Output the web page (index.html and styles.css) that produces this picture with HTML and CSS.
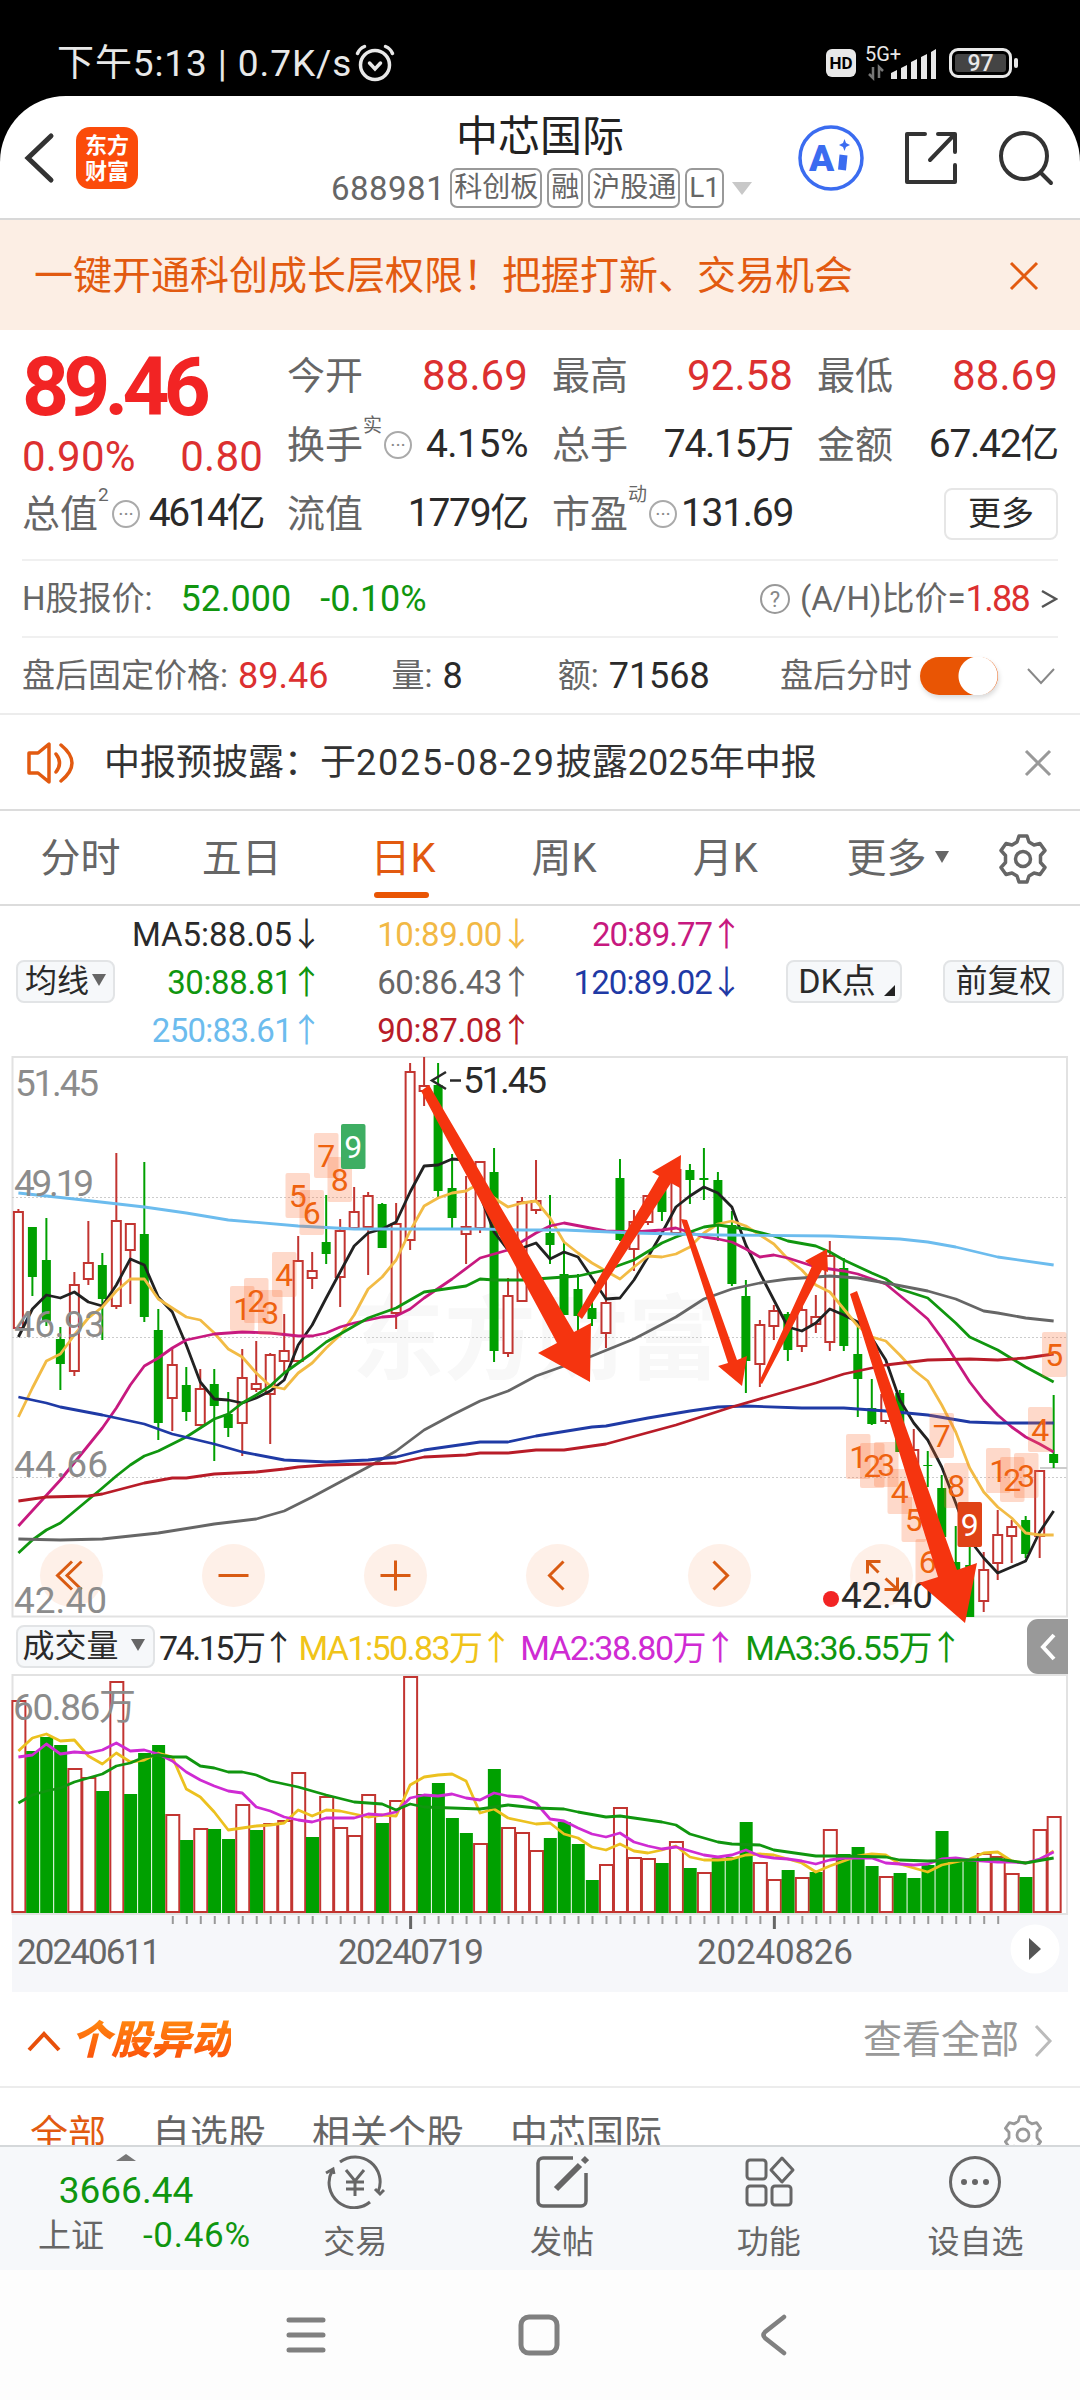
FILE: index.html
```
<!DOCTYPE html>
<html lang="zh-CN">

<head>
    <meta charset="UTF-8">
    <meta name="viewport" content="width=device-width, initial-scale=1.0">
    <title>中芯国际 688981</title>
    <link rel="stylesheet" href="styles.css">
</head>

<body>

    <!-- 状态栏 -->
    <div class="status-bar">
        <span class="status-time">下午5:13 | 0.7K/s</span>
        <svg class="alarm" width="40" height="40" viewBox="0 0 40 40" fill="none" stroke="#e8e8e8" stroke-width="3.5" stroke-linecap="round">
            <circle cx="20" cy="22" r="14.5" />
            <path d="M14.5 20l5.500 6l5.500-6M2.500 10.500q2-5 7-7M37.500 10.500q-2-5-7-7" />
        </svg>
        <div class="status-right">
            <span class="hd">HD</span>
            <svg class="signal" width="72" height="38" viewBox="0 0 72 38">
                <text class="net-text" x="1" y="17">5G+</text>
                <path d="M9 23v11l-4-4M15 34V23l4 4" fill="none" stroke="#777" stroke-width="2.500" />
                <path d="M27 35v-6l6-3v9zM37 35V24l6-3v14zM47 35V18l6-3v20zM57 35V13l6-3v25zM67 35V8l5-3v30z" fill="#e8e8e8" />
            </svg>
            <span class="battery"><span>97</span></span>
        </div>
    </div>

    <div class="app">
        <!-- 标题栏 -->
        <div class="header">
            <svg class="back" width="32" height="52" viewBox="0 0 32 52" fill="none" stroke="#333" stroke-width="5" stroke-linecap="round">
                <path d="M27 4L4 26l23 22" />
            </svg>
            <div class="logo">东方<br>财富</div>
            <div class="title">
                <div class="name">中芯国际</div>
                <div class="code">688981<span class="tag">科创板</span><span class="tag">融</span><span class="tag">沪股通</span><span class="tag">L1</span><i class="drop"></i></div>
            </div>
            <div class="actions">
                <svg width="66" height="66" viewBox="0 0 66 66">
                    <circle cx="33" cy="33" r="31" fill="none" stroke="#3b6cf0" stroke-width="3.500" />
                    <text class="ai-text" x="11" y="46">A</text>
                    <path d="M45.500 30l-1.500 15" stroke="#3b6cf0" stroke-width="8" />
                    <path d="M46.500 14l1.500 4 4 2-4 2-1.500 4-1.500-4-4-2 4-2z" fill="#3b6cf0" />
                </svg>
                <svg width="56" height="56" viewBox="0 0 56 56" fill="none" stroke="#333" stroke-width="4" stroke-linecap="round" stroke-linejoin="round">
                    <path d="M22 4H4v48h48V35M35 4h17v18M51 5L27 30" />
                </svg>
                <svg width="56" height="56" viewBox="0 0 56 56" fill="none" stroke="#333" stroke-width="4" stroke-linecap="round">
                    <circle cx="26" cy="26" r="23" />
                    <path d="M43 43l10 10" />
                </svg>
            </div>
        </div>

        <div class="banner">
            <span>一键开通科创成长层权限！把握打新、交易机会</span>
            <svg width="30" height="30" viewBox="0 0 30 30" stroke="#e25a10" stroke-width="3">
                <path d="M2 2l26 26M28 2L2 28" />
            </svg>
        </div>

        <!-- 行情 -->
        <div class="quote">
            <div class="quote-price">
                <div class="price">89.46</div>
                <div class="change"><span>0.90%</span><span>0.80</span></div>
                <div class="cell total"><label>总值<sup>2</sup></label><i class="dots">···</i><b class="tight">4614亿</b></div>
            </div>
            <div class="quote-col">
                <div class="cell"><label>今开</label><b class="red">88.69</b></div>
                <div class="cell"><label>换手<sup>实</sup></label><i class="dots">···</i><b>4.15%</b></div>
                <div class="cell"><label>流值</label><b class="mid">1779亿</b></div>
            </div>
            <div class="quote-col">
                <div class="cell"><label>最高</label><b class="red">92.58</b></div>
                <div class="cell"><label>总手</label><b class="mid">74.15万</b></div>
                <div class="cell"><label>市盈<sup>动</sup></label><i class="dots">···</i><b class="mid">131.69</b></div>
            </div>
            <div class="quote-col">
                <div class="cell"><label>最低</label><b class="red">88.69</b></div>
                <div class="cell"><label>金额</label><b class="mid">67.42亿</b></div>
                <div class="cell end"><span class="more-btn">更多</span></div>
            </div>
        </div>

        <div class="line-row">
            <span class="gray">H股报价:</span>
            <span class="green h-price">52.000</span>
            <span class="green h-rate">-0.10%</span>
            <div class="push">
                <i class="help">?</i><span class="gray">(A/H)比价=</span><span class="red ratio">1.88</span>
                <svg class="arrow-r" width="18" height="22" viewBox="0 0 18 22" fill="none" stroke="#555" stroke-width="2.500">
                    <path d="M2 3l14 8-14 8" />
                </svg>
            </div>
        </div>

        <div class="line-row after">
            <span class="gray">盘后固定价格:</span>
            <span class="red">89.46</span>
            <span class="gray vol-label">量:</span>
            <span>8</span>
            <span class="gray amt-label">额:</span>
            <span>71568</span>
            <div class="push">
                <span class="gray">盘后分时</span>
                <span class="switch"></span>
                <svg class="expand" width="28" height="18" viewBox="0 0 28 18" fill="none" stroke="#888" stroke-width="2">
                    <path d="M1 2l13 14L27 2" />
                </svg>
            </div>
        </div>

        <div class="notice">
            <svg width="48" height="42" viewBox="0 0 48 42" fill="none" stroke="#e25a10" stroke-width="3.500" stroke-linejoin="round">
                <path d="M2 11h9L22 2v38l-11-9H2z" />
                <path d="M29 12q7 9 0 18M34 3q22 18 0 36" stroke-linecap="round" />
            </svg>
            <p>中报预披露：于<span class="date">2025-08-29</span>披露2025年中报</p>
            <svg class="close" width="28" height="28" viewBox="0 0 28 28" stroke="#999" stroke-width="3">
                <path d="M2 2l24 24M26 2L2 26" />
            </svg>
        </div>

        <!-- K线周期 -->
        <div class="tabs">
            <span>分时</span>
            <span>五日</span>
            <span class="active">日K</span>
            <span>周K</span>
            <span>月K</span>
            <span>更多<i class="tri"></i></span>
            <svg width="50" height="50" viewBox="0 0 50 50" fill="none" stroke="#666" stroke-width="3.500" stroke-linejoin="round">
                <path d="M21 2h8l2 6 5 3 6-1.500 5 7-4.500 5v7l4.500 5-5 7-6-1.500-5 3-2 6h-8l-2-6-5-3-6 1.500-5-7 4.500-5v-7L3 16.500l5-7L14 11l5-3z" />
                <circle cx="25" cy="25" r="7.500" />
            </svg>
        </div>

        <!-- 均线数值 -->
        <div class="ma">
            <span class="chip ma-btn">均线<i class="tri"></i></span>
            <div class="ma-grid">
                <span class="c5">MA5:88.05<em>↓</em></span>
                <span class="c10">10:89.00<em>↓</em></span>
                <span class="c20">20:89.77<em>↑</em></span>
                <span class="c30">30:88.81<em>↑</em></span>
                <span class="c60">60:86.43<em>↑</em></span>
                <span class="c120">120:89.02<em>↓</em></span>
                <span class="c250">250:83.61<em>↑</em></span>
                <span class="c90">90:87.08<em>↑</em></span>
            </div>
            <span class="chip dk">DK点<i class="corner"></i></span>
            <span class="chip fq">前复权</span>
        </div>

        <svg id="price-chart" class="price-chart" viewBox="0 1052 1080 567"></svg>

        <div class="vol-head">
            <span class="chip vol-btn">成交量<i class="tri"></i></span>
            <span class="v0">74.15万<em>↑</em></span>
            <span class="v1">MA1:50.83万<em>↑</em></span>
            <span class="v2">MA2:38.80万<em>↑</em></span>
            <span class="v3">MA3:36.55万<em>↑</em></span>
            <span class="fold">
                <svg width="16" height="28" viewBox="0 0 16 28" fill="none" stroke="#fff" stroke-width="4">
                    <path d="M14 2L3 14l11 12" />
                </svg>
            </span>
        </div>

        <svg id="volume-chart" class="volume-chart" viewBox="0 1674 1080 318"></svg>

        <!-- 个股异动 -->
        <div class="section-head">
            <svg width="34" height="22" viewBox="0 0 34 22" fill="none" stroke="#e8500a" stroke-width="4">
                <path d="M2 20L17 4l15 16" />
            </svg>
            <h2>个股异动</h2>
            <span class="see-all">查看全部</span>
            <svg width="20" height="34" viewBox="0 0 20 34" fill="none" stroke="#bbb" stroke-width="3">
                <path d="M3 2l14 15L3 32" />
            </svg>
        </div>
        <div class="sub-tabs">
            <span class="active">全部</span>
            <span>自选股</span>
            <span>相关个股</span>
            <span>中芯国际</span>
            <svg width="40" height="40" viewBox="0 0 50 50" fill="none" stroke="#999" stroke-width="3.500" stroke-linejoin="round">
                <path d="M21 2h8l2 6 5 3 6-1.500 5 7-4.500 5v7l4.500 5-5 7-6-1.500-5 3-2 6h-8l-2-6-5-3-6 1.500-5-7 4.500-5v-7L3 16.500l5-7L14 11l5-3z" />
                <circle cx="25" cy="25" r="7.500" />
            </svg>
        </div>

        <!-- 底部导航 -->
        <div class="bottom-nav">
            <div class="index">
                <i class="up"></i>
                <div class="green point">3666.44</div>
                <div class="index-row"><span>上证</span><span class="green rate">-0.46%</span></div>
            </div>
            <div class="nav-item">
                <svg width="60" height="54" viewBox="0 0 60 54" fill="none" stroke="#666" stroke-width="3">
                    <path d="M15 7A25 25 0 0 1 53 37M45 47A25 25 0 0 1 7 16" />
                    <path d="M59 35l-4 4-5-5M1 18l7-4 1 5" />
                    <path d="M21 15l9 11 9-11M30 26v15M21 27h18M21 34h18" />
                </svg>
                <span>交易</span>
            </div>
            <div class="nav-item">
                <svg width="54" height="54" viewBox="0 0 54 54" fill="none" stroke="#666" stroke-width="3.500">
                    <path d="M38 3H8a5 5 0 0 0-5 5v38a5 5 0 0 0 5 5h38a5 5 0 0 0 5-5V18" />
                    <path d="M21 34L45 10M48 7l4-4" stroke-width="6" />
                </svg>
                <span>发帖</span>
            </div>
            <div class="nav-item">
                <svg width="54" height="54" viewBox="0 0 54 54" fill="none" stroke="#666" stroke-width="3">
                    <rect x="5" y="5" width="19" height="19" rx="3" />
                    <rect x="5" y="31" width="19" height="19" rx="3" />
                    <rect x="30" y="31" width="19" height="19" rx="3" />
                    <path d="M40 3l11 12-11 12-11-12z" stroke-linejoin="round" />
                </svg>
                <span>功能</span>
            </div>
            <div class="nav-item">
                <svg width="54" height="54" viewBox="0 0 54 54" fill="none" stroke="#666" stroke-width="3">
                    <circle cx="27" cy="27" r="24.500" />
                    <path d="M16 27h.01M27 27h.01M38 27h.01" stroke-width="6" stroke-linecap="round" />
                </svg>
                <span>设自选</span>
            </div>
        </div>
    </div>

    <!-- 系统导航键 -->
    <div class="system-nav">
        <svg class="menu" width="40" height="40" viewBox="0 0 40 40" stroke="#808080" stroke-width="5" stroke-linecap="round">
            <path d="M3 5h34M3 20h34M3 35h34" />
        </svg>
        <svg class="home" width="42" height="42" viewBox="0 0 42 42" fill="none" stroke="#808080" stroke-width="5">
            <rect x="3" y="3" width="36" height="36" rx="8" />
        </svg>
        <svg width="28" height="42" viewBox="0 0 28 42" fill="none" stroke="#808080" stroke-width="4.500" stroke-linecap="round">
            <path d="M25 3L6 18q-3 3 0 6l19 15" />
        </svg>
    </div>

    <script src="chart.js"></script>
</body>

</html>
```
FILE: styles.css
```
* {
    box-sizing: border-box;
}

body {
    margin: 0;
    width: 1080px;
    height: 2400px;
    overflow: hidden;
    background-color: #000;
    font-family: Roboto, "Noto Sans CJK SC", sans-serif;
    color: #2a2a2a;
    line-height: 1;
}

i,
em {
    font-style: normal;
}

svg {
    flex: none;
    display: block;
}

.red {
    color: #dc3030;
}

.green {
    color: #10960f;
}

.gray {
    color: #666;
}

/* 状态栏 */
.status-bar {
    height: 96px;
    padding: 30px 68px 0 57px;
    display: flex;
    align-items: center;
    color: #e8e8e8;
}

.status-time {
    font-size: 37px;
    letter-spacing: 0.9px;
    white-space: pre;
}

.alarm {
    margin-left: 3px;
}

.status-right {
    margin-left: auto;
    display: flex;
    align-items: center;
    gap: 8px;
}

.signal {
    overflow: visible;
}

.hd {
    width: 30px;
    height: 28px;
    border-radius: 6px;
    background-color: #e8e8e8;
    color: #000;
    font-size: 17px;
    font-weight: 700;
    line-height: 29px;
    text-align: center;
}

.net-text {
    font-size: 20px;
    fill: #e8e8e8;
}

.battery {
    position: relative;
    width: 63px;
    height: 30px;
    margin-left: 5px;
    padding: 3px;
    border: 3px solid #e8e8e8;
    border-radius: 9px;
}

.battery span {
    display: block;
    height: 18px;
    border-radius: 3px;
    background-color: #444;
    font-size: 23px;
    line-height: 19px;
    font-weight: 500;
    text-align: center;
}

.battery::after {
    content: "";
    position: absolute;
    right: -9px;
    top: 7px;
    width: 4px;
    height: 10px;
    border-radius: 2px;
    background-color: #e8e8e8;
}

.app {
    height: 2174px;
    overflow: hidden;
    border-radius: 66px 66px 0 0;
    background-color: #fff;
}

/* 标题栏 */
.header {
    height: 124px;
    display: flex;
    align-items: center;
    padding: 2px 26px 0 24px;
    border-bottom: 2px solid #d8d8d8;
}

.logo {
    width: 62px;
    height: 62px;
    margin-left: 20px;
    padding-top: 6px;
    border-radius: 14px;
    background-color: #fb4b0a;
    color: #fff;
    font-size: 22px;
    font-weight: 700;
    line-height: 26px;
    text-align: center;
}

.title {
    width: 440px;
    margin-left: 182px;
    display: flex;
    flex-direction: column;
    align-items: center;
    white-space: nowrap;
}

.name {
    margin-top: 4px;
    font-size: 42px;
    line-height: 50px;
    color: #222;
}

.code {
    display: flex;
    align-items: center;
    height: 40px;
    margin: 6px 0 0 3px;
    font-size: 33px;
    letter-spacing: 0.5px;
    color: #666;
}

.tag {
    height: 40px;
    margin-left: 5px;
    padding: 0 2px;
    border: 2px solid #999;
    border-radius: 7px;
    font-size: 28px;
    line-height: 36px;
    letter-spacing: 0;
}

.drop {
    margin-left: 8px;
    border: 10px solid transparent;
    border-top: 13px solid #c8c8c8;
    border-bottom: 0;
}

.actions {
    margin-left: auto;
    display: flex;
    align-items: center;
    gap: 39px;
}

.ai-text {
    font-size: 37px;
    font-weight: 900;
    fill: #3b6cf0;
}

.banner {
    height: 110px;
    padding: 2px 41px 0 34px;
    display: flex;
    align-items: center;
    justify-content: space-between;
    background-color: #fceee4;
    color: #e25a10;
    font-size: 39px;
}

/* 行情 */
.quote {
    height: 229px;
    padding: 0 22px;
    display: flex;
    gap: 24px;
}

.quote-price {
    width: 241px;
}

.price {
    height: 106px;
    padding-top: 13px;
    font-size: 82px;
    line-height: 88px;
    font-weight: 700;
    letter-spacing: -5.800px;
    color: #f22424;
}

.change {
    height: 42px;
    display: flex;
    justify-content: space-between;
    font-size: 42px;
    line-height: 42px;
    letter-spacing: 0.2px;
    color: #dc3030;
}

.quote-col {
    width: 241px;
    padding-top: 11px;
}

.cell {
    height: 69px;
    display: flex;
    align-items: center;
    justify-content: space-between;
    white-space: nowrap;
}

.total {
    margin-top: 1px;
}

.cell label {
    position: relative;
    font-size: 38px;
    color: #666;
}

.cell sup {
    position: absolute;
    left: 100%;
    top: -9px;
    font-size: 19px;
    line-height: 18px;
}

.cell b {
    font-size: 39px;
    font-weight: 400;
    letter-spacing: -0.5px;
}

.cell .mid {
    letter-spacing: -1.300px;
}

.cell .red {
    font-size: 42px;
    letter-spacing: 0.1px;
}

.cell .tight {
    letter-spacing: -2.500px;
}

.dots {
    width: 28px;
    height: 28px;
    margin: 0 auto 0 21px;
    border: 2px solid #aaa;
    border-radius: 50%;
    font-size: 20px;
    line-height: 24px;
    text-align: center;
    color: #888;
}

.total .dots {
    margin-left: 14px;
}

.end {
    justify-content: flex-end;
}

.more-btn {
    width: 114px;
    height: 52px;
    border: 2px solid #e6e6e6;
    border-radius: 8px;
    font-size: 33px;
    line-height: 48px;
    text-align: center;
}

.line-row {
    height: 77px;
    margin: 0 22px;
    display: flex;
    align-items: center;
    border-top: 2px solid #f0f0f0;
    font-size: 33px;
    white-space: nowrap;
}

.line-row .green,
.line-row .red {
    font-size: 36px;
}

.line-row .ratio {
    letter-spacing: -1.700px;
}

.h-price {
    margin-left: 28px;
}

.h-rate {
    margin-left: 29px;
}

.push {
    margin-left: auto;
    display: flex;
    align-items: center;
}

.help {
    width: 30px;
    height: 30px;
    margin-right: 10px;
    border: 2px solid #999;
    border-radius: 50%;
    font-size: 22px;
    line-height: 27px;
    text-align: center;
    color: #888;
}

.arrow-r {
    margin-left: 11px;
}

.after {
    font-size: 36px;
}

.after .gray {
    font-size: 33px;
    margin-right: 10px;
}

.after .vol-label {
    margin-left: 63px;
}

.after .amt-label {
    margin-left: 95px;
}

.after .push .gray {
    margin-right: 8px;
}

.switch {
    width: 78px;
    height: 38px;
    margin-right: 29px;
    border-radius: 19px;
    background: radial-gradient(circle at 58px 19px, #fff 19px, #e95504 20px);
    box-shadow: 1px 3px 5px rgba(0, 0, 0, 0.15);
}

.expand {
    margin-right: 3px;
}

.notice {
    height: 98px;
    padding: 2px 28px 0 27px;
    display: flex;
    align-items: center;
    border-top: 2px solid #ececec;
    border-bottom: 2px solid #dcdcdc;
    font-size: 36px;
    color: #333;
}

.notice p {
    margin: 0 0 0 29px;
}

.date {
    letter-spacing: 1.800px;
}

.close {
    margin-left: auto;
}

/* K线周期 */
.tabs {
    height: 95px;
    padding: 2px 32px 0 0;
    display: flex;
    align-items: center;
    border-bottom: 2px solid #dcdcdc;
    font-size: 40px;
    color: #666;
}

.tabs span {
    position: relative;
    width: 161.200px;
    text-align: center;
}

.tabs svg {
    margin-left: auto;
}

.tabs .active {
    color: #e25a10;
}

.tabs .active::after {
    content: "";
    position: absolute;
    left: 52px;
    bottom: -19px;
    width: 55px;
    height: 6px;
    border-radius: 3px;
    background-color: #e95504;
}

.tri {
    display: inline-block;
    margin-left: 8px;
    border: 7px solid transparent;
    border-top: 12px solid #666;
    border-bottom: 0;
    vertical-align: 9px;
}

.tabs .tri {
    margin-right: -22px;
}

/* 均线数值 */
.ma {
    height: 146px;
    padding: 4px 16px 0;
    display: flex;
    align-items: center;
}

.chip {
    height: 43px;
    border: 2px solid #e2e4e6;
    border-radius: 8px;
    background-color: #f6f8fa;
    font-size: 32px;
    line-height: 39px;
    text-align: center;
    white-space: nowrap;
}

.ma-btn {
    width: 99px;
}

.ma-btn .tri {
    margin-left: 3px;
    vertical-align: 6px;
}

.ma-grid {
    display: grid;
    grid-template-columns: 202px 210px 210px;
    grid-auto-rows: 48px;
    align-items: center;
    justify-items: end;
    font-size: 33px;
    letter-spacing: -0.4px;
}

em {
    display: inline-block;
    margin-left: 5px;
    font-family: "Noto Sans CJK SC", sans-serif;
    width: 20px;
    text-indent: -7px;
    letter-spacing: 0;
}

.c5 {
    letter-spacing: 0;
}

.c10 {
    color: #f2b945;
}

.c20 {
    color: #c7197f;
    letter-spacing: -1px;
}

.c30 {
    color: #10960f;
}

.c60 {
    color: #666;
}

.c120 {
    color: #1f3aa5;
    letter-spacing: -0.9px;
}

.c250 {
    color: #6cbcee;
    letter-spacing: -0.7px;
}

.c90 {
    color: #b81c28;
}

.dk {
    position: relative;
    width: 116px;
    margin-left: 49px;
    padding-right: 14px;
    font-size: 34px;
}

.corner {
    position: absolute;
    right: 5px;
    bottom: 5px;
    border-left: 11px solid transparent;
    border-bottom: 11px solid #222;
}

.fq {
    width: 121px;
    margin-left: auto;
}

/* 图表 */
.price-chart {
    width: 1080px;
    height: 567px;
    overflow: visible;
    position: relative;
    z-index: 1;
}

.volume-chart {
    width: 1080px;
    height: 318px;
}

.axis-text {
    font-size: 37px;
    fill: #8c8c8c;
}

.date-text {
    font-size: 35px;
    fill: #666;
}

.mark-text {
    font-size: 37px;
    fill: #2a2a2a;
}

.badge-text {
    font-size: 32px;
    text-anchor: middle;
}

.watermark {
    font-size: 92px;
    font-weight: 700;
    fill: #f8f8f8;
}

.vol-head {
    height: 55px;
    padding: 0 12px 0 16px;
    display: flex;
    align-items: center;
    font-size: 34px;
    letter-spacing: -1.600px;
    white-space: nowrap;
}

.vol-btn {
    width: 139px;
    padding-right: 4px;
    letter-spacing: 0;
}

.vol-btn .tri {
    margin-left: 12px;
    vertical-align: 6px;
}

.v0 {
    margin-left: 4px;
    letter-spacing: -2.500px;
}

.v1 {
    margin-left: 10px;
    color: #f0c419;
}

.v2 {
    margin-left: 14px;
    letter-spacing: -1.400px;
    color: #cf2bd3;
}

.v3 {
    margin-left: 15px;
    letter-spacing: -1.300px;
    color: #10960f;
}

.fold {
    width: 41px;
    height: 55px;
    margin-left: auto;
    padding: 14px 0 0 13px;
    border-radius: 11px 0 0 11px;
    background-color: #999;
}

/* 个股异动 */
.section-head {
    height: 96px;
    padding: 3px 27px 0;
    display: flex;
    align-items: center;
    border-bottom: 2px solid #ececec;
}

.section-head h2 {
    margin: 0 0 0 10px;
    font-size: 40px;
    line-height: 48px;
    font-weight: 900;
    font-style: italic;
    background: linear-gradient(#ff8a10, #fb4b0a);
    -webkit-background-clip: text;
    color: transparent;
}

.see-all {
    margin: 0 14px 0 auto;
    font-size: 39px;
    color: #999;
}

.sub-tabs {
    height: 57px;
    padding: 26px 37px 0 30px;
    display: flex;
    align-items: flex-start;
    gap: 46px;
    overflow: hidden;
    font-size: 38px;
    line-height: 40px;
    color: #666;
}

.sub-tabs .active {
    color: #e25a10;
}

.sub-tabs svg {
    margin: 1px 0 0 auto;
}

/* 底部导航 */
.bottom-nav {
    height: 125px;
    display: flex;
    border-top: 2px solid #d5d8da;
    background-color: #f6f8fa;
}

.index {
    width: 252px;
    text-align: center;
}

.up {
    display: block;
    width: 0;
    margin: 7px auto 12px;
    border: 10px solid transparent;
    border-top: 0;
    border-bottom: 7px solid #777;
}

.point {
    font-size: 37px;
    line-height: 36px;
}

.index-row {
    margin-top: 10px;
    padding: 0 0 0 38px;
    display: flex;
    gap: 39px;
    font-size: 33px;
    line-height: 34px;
    color: #666;
}

.rate {
    font-size: 35px;
    letter-spacing: 0.7px;
}

.nav-item {
    width: 206.700px;
    padding-top: 8px;
    display: flex;
    flex-direction: column;
    align-items: center;
    gap: 17px;
    font-size: 32px;
    color: #666;
}

.system-nav {
    height: 130px;
    padding-left: 286px;
    display: flex;
    align-items: center;
    background-color: #fdfdfd;
}

.menu {
    margin-right: 192px;
}

.home {
    margin-right: 199px;
}
```
FILE: chart.js
```
const RED = '#c23531', GREEN = '#00a000';
const px = i => 18.4 + i * 13.99;

// 颜色, 最高, 实体上沿, 实体下沿, 最低
const candles = [
    ['r', 1209, 1212, 1328, 1328], ['g', 1227, 1227, 1277, 1296], ['g', 1218, 1260, 1321, 1326], ['g', 1327, 1339, 1364, 1390],
    ['r', 1272, 1285, 1371, 1376], ['r', 1221, 1263, 1279, 1285], ['g', 1253, 1265, 1299, 1340], ['r', 1153, 1221, 1306, 1309],
    ['r', 1223, 1224, 1250, 1304], ['g', 1162, 1234, 1317, 1322], ['g', 1309, 1330, 1423, 1440], ['r', 1347, 1365, 1398, 1431],
    ['g', 1367, 1385, 1412, 1421], ['r', 1369, 1389, 1425, 1425], ['g', 1369, 1384, 1406, 1461], ['g', 1392, 1414, 1428, 1437],
    ['r', 1349, 1378, 1423, 1456], ['r', 1341, 1384, 1389, 1392], ['r', 1353, 1355, 1394, 1444], ['r', 1314, 1351, 1361, 1373],
    ['r', 1236, 1261, 1361, 1361], ['r', 1252, 1271, 1278, 1289], ['g', 1195, 1242, 1254, 1264], ['r', 1219, 1231, 1277, 1307],
    ['r', 1187, 1212, 1228, 1230], ['r', 1192, 1196, 1227, 1275], ['g', 1203, 1204, 1248, 1248], ['r', 1203, 1224, 1313, 1329],
    ['r', 1063, 1072, 1240, 1250], ['r', 1057, 1086, 1091, 1106], ['g', 1063, 1085, 1191, 1197], ['g', 1154, 1188, 1218, 1228],
    ['r', 1176, 1227, 1234, 1264], ['r', 1162, 1162, 1228, 1233], ['g', 1148, 1172, 1351, 1362], ['r', 1278, 1296, 1353, 1357],
    ['r', 1197, 1202, 1301, 1301], ['r', 1160, 1201, 1210, 1214], ['g', 1195, 1233, 1245, 1264], ['g', 1242, 1274, 1315, 1315],
    ['g', 1274, 1289, 1316, 1333], ['g', 1302, 1308, 1319, 1326], ['r', 1280, 1303, 1333, 1348], ['g', 1159, 1178, 1240, 1241],
    ['r', 1210, 1222, 1249, 1271], ['r', 1196, 1196, 1222, 1225], ['g', 1183, 1187, 1212, 1221], ['r', 1165, 1170, 1233, 1233],
    ['g', 1164, 1170, 1180, 1204], ['g', 1148, 1178, 1180, 1200], ['g', 1172, 1180, 1224, 1241], ['g', 1211, 1225, 1284, 1286],
    ['g', 1280, 1296, 1361, 1393], ['r', 1320, 1325, 1364, 1387], ['r', 1305, 1311, 1326, 1340], ['g', 1312, 1314, 1350, 1361],
    ['r', 1303, 1310, 1346, 1352], ['r', 1295, 1317, 1324, 1333], ['r', 1241, 1256, 1342, 1351], ['g', 1258, 1268, 1346, 1351],
    ['g', 1325, 1354, 1379, 1417], ['g', 1379, 1408, 1424, 1425], ['r', 1390, 1395, 1421, 1424], ['g', 1390, 1393, 1452, 1452],
    ['r', 1429, 1450, 1480, 1485], ['g', 1451, 1465, 1466, 1487], ['g', 1475, 1488, 1537, 1540], ['g', 1526, 1562, 1570, 1580],
    ['g', 1547, 1565, 1617, 1617], ['r', 1552, 1570, 1601, 1612], ['r', 1510, 1535, 1563, 1580], ['r', 1520, 1527, 1536, 1563],
    ['g', 1516, 1520, 1554, 1558], ['r', 1470, 1471, 1536, 1558], ['g', 1395, 1454, 1463, 1468]
];

// 每根K线一个值的均线
const ma5 = [1337, 1309, 1295, 1298, 1292, 1302, 1306, 1285, 1259, 1265, 1297, 1312, 1345, 1382, 1399, 1400, 1403, 1398, 1391, 1380, 1345, 1325, 1298, 1272, 1246, 1233, 1229, 1222, 1192, 1166, 1165, 1159, 1160, 1195, 1232, 1250, 1248, 1243, 1259, 1252, 1257, 1278, 1299, 1298, 1280, 1257, 1233, 1207, 1196, 1187, 1193, 1207, 1245, 1273, 1300, 1327, 1331, 1323, 1309, 1315, 1322, 1338, 1360, 1400, 1423, 1440, 1467, 1503, 1540, 1558, 1573, 1567, 1561, 1532, 1511];
const ma10 = [1417, 1388, 1361, 1354, 1335, 1318, 1307, 1291, 1279, 1279, 1299, 1308, 1317, 1320, 1333, 1349, 1357, 1373, 1386, 1389, 1373, 1363, 1348, 1335, 1315, 1289, 1277, 1260, 1231, 1206, 1198, 1193, 1191, 1183, 1198, 1207, 1203, 1201, 1218, 1242, 1253, 1263, 1271, 1279, 1267, 1256, 1257, 1254, 1247, 1233, 1224, 1221, 1226, 1235, 1244, 1259, 1270, 1285, 1292, 1309, 1326, 1337, 1341, 1355, 1370, 1381, 1405, 1432, 1468, 1492, 1507, 1518, 1533, 1535, 1535];

// 其余均线只记录转折点 [序号, y]
const ma20 = [[0, 1526], [3, 1480], [6, 1428], [7, 1408], [8, 1385], [9, 1366], [10, 1358], [11, 1348], [12, 1340], [14, 1334], [16, 1332], [18, 1333], [20, 1336], [21, 1336], [22, 1333], [23, 1327], [24, 1323], [26, 1317], [27, 1316], [28, 1309], [29, 1298], [31, 1279], [33, 1258], [35, 1250], [37, 1233], [38, 1226], [39, 1223], [42, 1231], [44, 1232], [46, 1230], [47, 1228], [49, 1237], [50, 1239], [51, 1242], [52, 1249], [53, 1257], [54, 1255], [55, 1258], [57, 1267], [59, 1271], [60, 1274], [61, 1279], [62, 1284], [64, 1307], [65, 1319], [66, 1338], [67, 1360], [68, 1382], [69, 1400], [70, 1415], [71, 1427], [72, 1437], [73, 1444], [74, 1452]];
const ma30 = [[0, 1553], [1, 1540], [2, 1530], [3, 1523], [6, 1488], [7, 1476], [8, 1465], [9, 1456], [10, 1451], [12, 1437], [14, 1419], [15, 1414], [16, 1403], [17, 1395], [18, 1386], [19, 1373], [20, 1363], [21, 1353], [22, 1342], [24, 1326], [25, 1318], [27, 1308], [29, 1292], [30, 1290], [32, 1286], [33, 1279], [34, 1280], [36, 1280], [38, 1278], [40, 1276], [42, 1270], [44, 1260], [46, 1243], [47, 1237], [49, 1227], [50, 1225], [52, 1229], [54, 1236], [55, 1241], [57, 1246], [58, 1252], [59, 1260], [61, 1273], [62, 1279], [63, 1289], [65, 1298], [67, 1323], [68, 1337], [70, 1350], [72, 1367], [74, 1382]];
const ma60 = [[0, 1539], [3, 1540], [6, 1539], [10, 1533], [14, 1524], [17, 1519], [19, 1511], [21, 1497], [23, 1482], [25, 1467], [27, 1451], [29, 1430], [31, 1415], [33, 1401], [35, 1391], [37, 1376], [41, 1356], [44, 1339], [47, 1317], [49, 1299], [51, 1289], [53, 1283], [55, 1279], [57, 1277], [58, 1276], [60, 1278], [62, 1283], [65, 1291], [67, 1299], [69, 1311], [70, 1313], [72, 1318], [74, 1321]];
const ma90 = [[0, 1501], [2, 1497], [5, 1496], [6, 1494], [9, 1483], [11, 1478], [12, 1478], [14, 1474], [17, 1472], [19, 1469], [20, 1467], [22, 1465], [25, 1464], [27, 1463], [29, 1457], [32, 1455], [33, 1453], [35, 1453], [37, 1450], [39, 1450], [42, 1444], [47, 1425], [51, 1407], [54, 1395], [57, 1383], [59, 1374], [60, 1371], [62, 1365], [65, 1360], [68, 1359], [70, 1360], [72, 1358], [74, 1354]];
const ma120 = [[0, 1397], [2, 1403], [3, 1407], [6, 1415], [9, 1424], [11, 1434], [14, 1444], [16, 1452], [19, 1460], [22, 1462], [25, 1460], [27, 1457], [29, 1450], [33, 1442], [35, 1442], [37, 1436], [41, 1427], [42, 1426], [45, 1418], [48, 1411], [50, 1407], [52, 1406], [56, 1408], [59, 1408], [62, 1411], [65, 1415], [68, 1422], [70, 1423], [74, 1423]];
const ma250 = [[0, 1193], [4, 1199], [9, 1207], [12, 1213], [15, 1220], [20, 1226], [24, 1229], [33, 1229], [36, 1230], [39, 1230], [44, 1233], [50, 1235], [58, 1236], [63, 1239], [65, 1242], [67, 1247], [70, 1257], [74, 1265]];

// 九转序列
const badges = [
    [1, 230, 1286], [2, 244, 1278], [3, 258, 1290], [4, 272, 1252], [5, 285.5, 1173], [6, 299.5, 1190], [7, 314, 1133], [8, 327.5, 1157],
    [1, 846, 1434], [2, 860, 1443], [3, 874, 1442], [4, 887.5, 1469], [5, 901.5, 1497], [6, 915.5, 1539], [7, 929.5, 1413], [8, 944, 1463],
    [1, 986, 1448], [2, 1000, 1457], [3, 1014, 1453], [4, 1028, 1407], [5, 1042, 1332],
    [9, 341, 1124, '#3eae63'], [9, 957.5, 1502, '#e04316']
];

// 手绘箭头
const arrows = [
    '421,1091 429,1085 574,1332 591,1323 590,1382 538,1353 557,1343',
    '577,1315 582,1319 671,1183 680,1188 681,1155 652,1172 659,1176',
    '681,1219 687,1220 737,1360 747,1356 742,1386 718,1366 728,1363',
    '759,1382 762,1384 822,1270 828,1272 827,1249 805,1261 812,1266',
    '850,1294 857,1291 957,1570 977,1563 965,1623 919,1583 938,1577'
];

const volumes = 'r1700 g1751 g1737 g1745 r1768 r1777 g1791 r1681 g1794 g1753 g1745 r1814 g1840 r1828 g1829 g1839 r1804 g1830 r1823 r1820 r1772 g1837 r1796 r1827 r1835 r1794 g1823 r1800 r1676 g1794 g1783 g1818 g1833 r1843 g1769 r1827 r1832 r1850 g1838 g1822 g1844 g1880 r1864 r1807 r1857 r1858 g1863 r1841 g1868 r1872 g1858 g1857 g1822 r1862 r1879 g1870 r1877 g1872 r1829 g1854 g1847 g1866 r1876 g1873 g1878 g1865 g1831 g1862 g1861 r1853 r1856 r1873 g1877 r1829 r1816'.split(' ');
const volMa1 = [1751, 1738, 1734, 1741, 1740, 1756, 1764, 1753, 1762, 1760, 1753, 1757, 1789, 1797, 1812, 1830, 1828, 1826, 1825, 1823, 1810, 1816, 1810, 1811, 1814, 1817, 1815, 1816, 1785, 1777, 1775, 1774, 1781, 1813, 1809, 1818, 1821, 1824, 1823, 1834, 1838, 1847, 1850, 1844, 1851, 1853, 1850, 1846, 1857, 1860, 1860, 1859, 1855, 1854, 1855, 1859, 1863, 1872, 1866, 1861, 1856, 1854, 1855, 1864, 1868, 1872, 1865, 1862, 1859, 1853, 1852, 1861, 1863, 1860, 1851];
const volMa2 = [1757, 1755, 1744, 1754, 1752, 1753, 1750, 1743, 1751, 1750, 1754, 1761, 1772, 1780, 1786, 1791, 1793, 1807, 1811, 1817, 1820, 1822, 1818, 1818, 1818, 1814, 1815, 1812, 1798, 1795, 1796, 1794, 1798, 1800, 1793, 1796, 1797, 1803, 1819, 1821, 1828, 1834, 1837, 1833, 1842, 1846, 1849, 1847, 1851, 1855, 1857, 1855, 1850, 1856, 1858, 1859, 1861, 1864, 1860, 1858, 1858, 1858, 1863, 1864, 1865, 1864, 1859, 1858, 1860, 1861, 1862, 1862, 1863, 1859, 1852];
const volMa3 = [[0, 1803], [1, 1795], [2, 1791], [3, 1788], [4, 1782], [5, 1778], [6, 1774], [7, 1766], [8, 1763], [9, 1757], [10, 1755], [11, 1757], [12, 1757], [13, 1766], [14, 1768], [15, 1772], [16, 1772], [17, 1775], [18, 1781], [20, 1787], [22, 1795], [24, 1802], [26, 1804], [27, 1810], [28, 1804], [29, 1807], [33, 1809], [35, 1805], [37, 1808], [39, 1809], [40, 1812], [42, 1817], [43, 1816], [44, 1818], [46, 1822], [47, 1825], [48, 1834], [49, 1838], [50, 1842], [51, 1844], [53, 1845], [54, 1850], [56, 1854], [57, 1856], [59, 1856], [62, 1857], [63, 1860], [65, 1861], [68, 1860], [70, 1859], [72, 1863], [74, 1858]];

function line(data, color) {
    const pts = data.map((d, i) => Array.isArray(d) ? `${px(d[0])},${d[1]}` : `${px(i)},${d}`).join(' ');
    return `<polyline points="${pts}" fill="none" stroke="${color}" stroke-width="2.8" stroke-linejoin="round"/>`;
}

function text(x, y, cls, str, width) {
    const len = width ? ` textLength="${width}"` : '';
    return `<text x="${x}" y="${y}" class="${cls}"${len}>${str}</text>`;
}

function roundButton(x, path) {
    return `<circle cx="${x}" cy="1575.5" r="31.5" fill="#fef0e8"/><path transform="translate(${x} 1575.5)" d="${path}" fill="none" stroke="#d95b12" stroke-width="3"/>`;
}

function drawPrice() {
    let s = '<rect x="12.500" y="1057" width="1054.500" height="559.500" fill="none" stroke="#e2e2e2" stroke-width="2"/>';
    s += text(352, 1372, 'watermark', '东方财富');
    [1197, 1337, 1477].forEach(y => {
        s += `<path d="M12 ${y}.5H1067" stroke="#ccc" stroke-width="1" stroke-dasharray="2 2"/>`;
    });
    s += '<path d="M1040 1468H1067" stroke="#ccc" stroke-width="2"/>';

    // 图表操作按钮
    s += roundButton(71.5, 'M0.500 -14L-14 0L0.500 14M10 -14L-4.500 0L10 14');
    s += roundButton(233.5, 'M-15 0H15');
    s += roundButton(395.5, 'M-15 0H15M0 -15V15');
    s += roundButton(557.5, 'M6 -14L-8 0L6 14');
    s += roundButton(719.5, 'M-6 -14L8 0L-6 14');
    s += roundButton(881.5, 'M-14 -2V-14H-1M-14 -14L-3 -3M16 2V14H3M16 14L4 3');

    candles.forEach(([c, high, top, bottom, low], i) => {
        const x = px(i);
        if (c === 'g') {
            s += `<path d="M${x} ${high}V${low}" stroke="${GREEN}" stroke-width="2"/>`;
            s += `<rect x="${x - 4.5}" y="${top}" width="9" height="${bottom - top}" fill="${GREEN}"/>`;
        } else {
            s += `<path d="M${x} ${high}V${top}M${x} ${bottom}V${low}" stroke="${RED}" stroke-width="2"/>`;
            s += `<rect x="${x - 4.5}" y="${top}" width="9" height="${bottom - top}" fill="#fff" stroke="${RED}" stroke-width="2"/>`;
        }
    });

    s += line(ma5, '#222') + line(ma10, '#f2bb45') + line(ma20, '#c7197f') + line(ma30, '#10960f');
    s += line(ma60, '#666') + line(ma120, '#1f3aa5') + line(ma90, '#b81c28') + line(ma250, '#6cbcee');

    s += text(15, 1096, 'axis-text', '51.45', 84) + text(14, 1196, 'axis-text', '49.19', 80) + text(14, 1337, 'axis-text', '46.93', 91);
    s += text(14, 1477, 'axis-text', '44.66', 94) + text(14, 1613, 'axis-text', '42.40', 93);
    s += text(463, 1093, 'mark-text', '51.45', 84) + '<path d="M446 1072L432 1080.500L446 1089M450 1080.500H461" fill="none" stroke="#2a2a2a" stroke-width="2.500"/>';
    s += '<circle cx="831" cy="1599" r="8" fill="#f22424"/>' + text(841, 1608, 'mark-text', '42.40', 92);

    badges.forEach(([n, x, y, solid]) => {
        const fill = solid || 'rgba(250, 110, 50, 0.26)';
        s += `<rect x="${x}" y="${y}" width="24.5" height="45" rx="2" fill="${fill}"/>`;
        s += `<text x="${x + 12.2}" y="${y + 34}" class="badge-text" fill="${solid ? '#fff' : '#ee620f'}">${n}</text>`;
    });

    arrows.forEach(p => {
        s += `<polygon points="${p}" fill="#f5340f"/>`;
    });
    document.getElementById('price-chart').innerHTML = s;
}

function drawVolume() {
    let s = '<rect x="12" y="1915" width="1056" height="77" fill="#f6f7fa"/>';
    s += '<rect x="12.500" y="1675" width="1054.500" height="239" fill="none" stroke="#e2e2e2" stroke-width="2"/>';
    volumes.forEach((v, i) => {
        const y = +v.slice(1), x = px(i);
        if (v[0] === 'g') {
            s += `<rect x="${x - 6.2}" y="${y}" width="13" height="${1913 - y}" fill="${GREEN}"/>`;
        } else {
            s += `<rect x="${x - 6}" y="${y + 1}" width="13" height="${1912 - y - 1}" fill="#fff" stroke="${RED}" stroke-width="2"/>`;
        }
    });
    s += text(13, 1720, 'axis-text', '60.86万', 123);
    s += line(volMa1, '#ecc11f') + line(volMa2, '#cf2bd3') + line(volMa3, '#10960f');

    // 时间轴刻度
    for (let i = 11; i <= 70; i++) {
        const big = i === 28 || i === 54;
        s += `<path d="M${px(i) + 0.5} 1916V${big ? 1929 : 1924}" stroke="${big ? '#666' : '#999'}" stroke-width="${big ? 3 : 2}"/>`;
    }
    s += text(17, 1964, 'date-text', '20240611', 144) + text(338, 1964, 'date-text', '20240719', 146) + text(697, 1964, 'date-text', '20240826', 156);
    s += '<circle cx="1035" cy="1949" r="24.500" fill="#fff"/><path d="M1029 1938L1041 1949L1029 1960Z" fill="#555"/>';
    document.getElementById('volume-chart').innerHTML = s;
}

drawPrice();
drawVolume();
```
